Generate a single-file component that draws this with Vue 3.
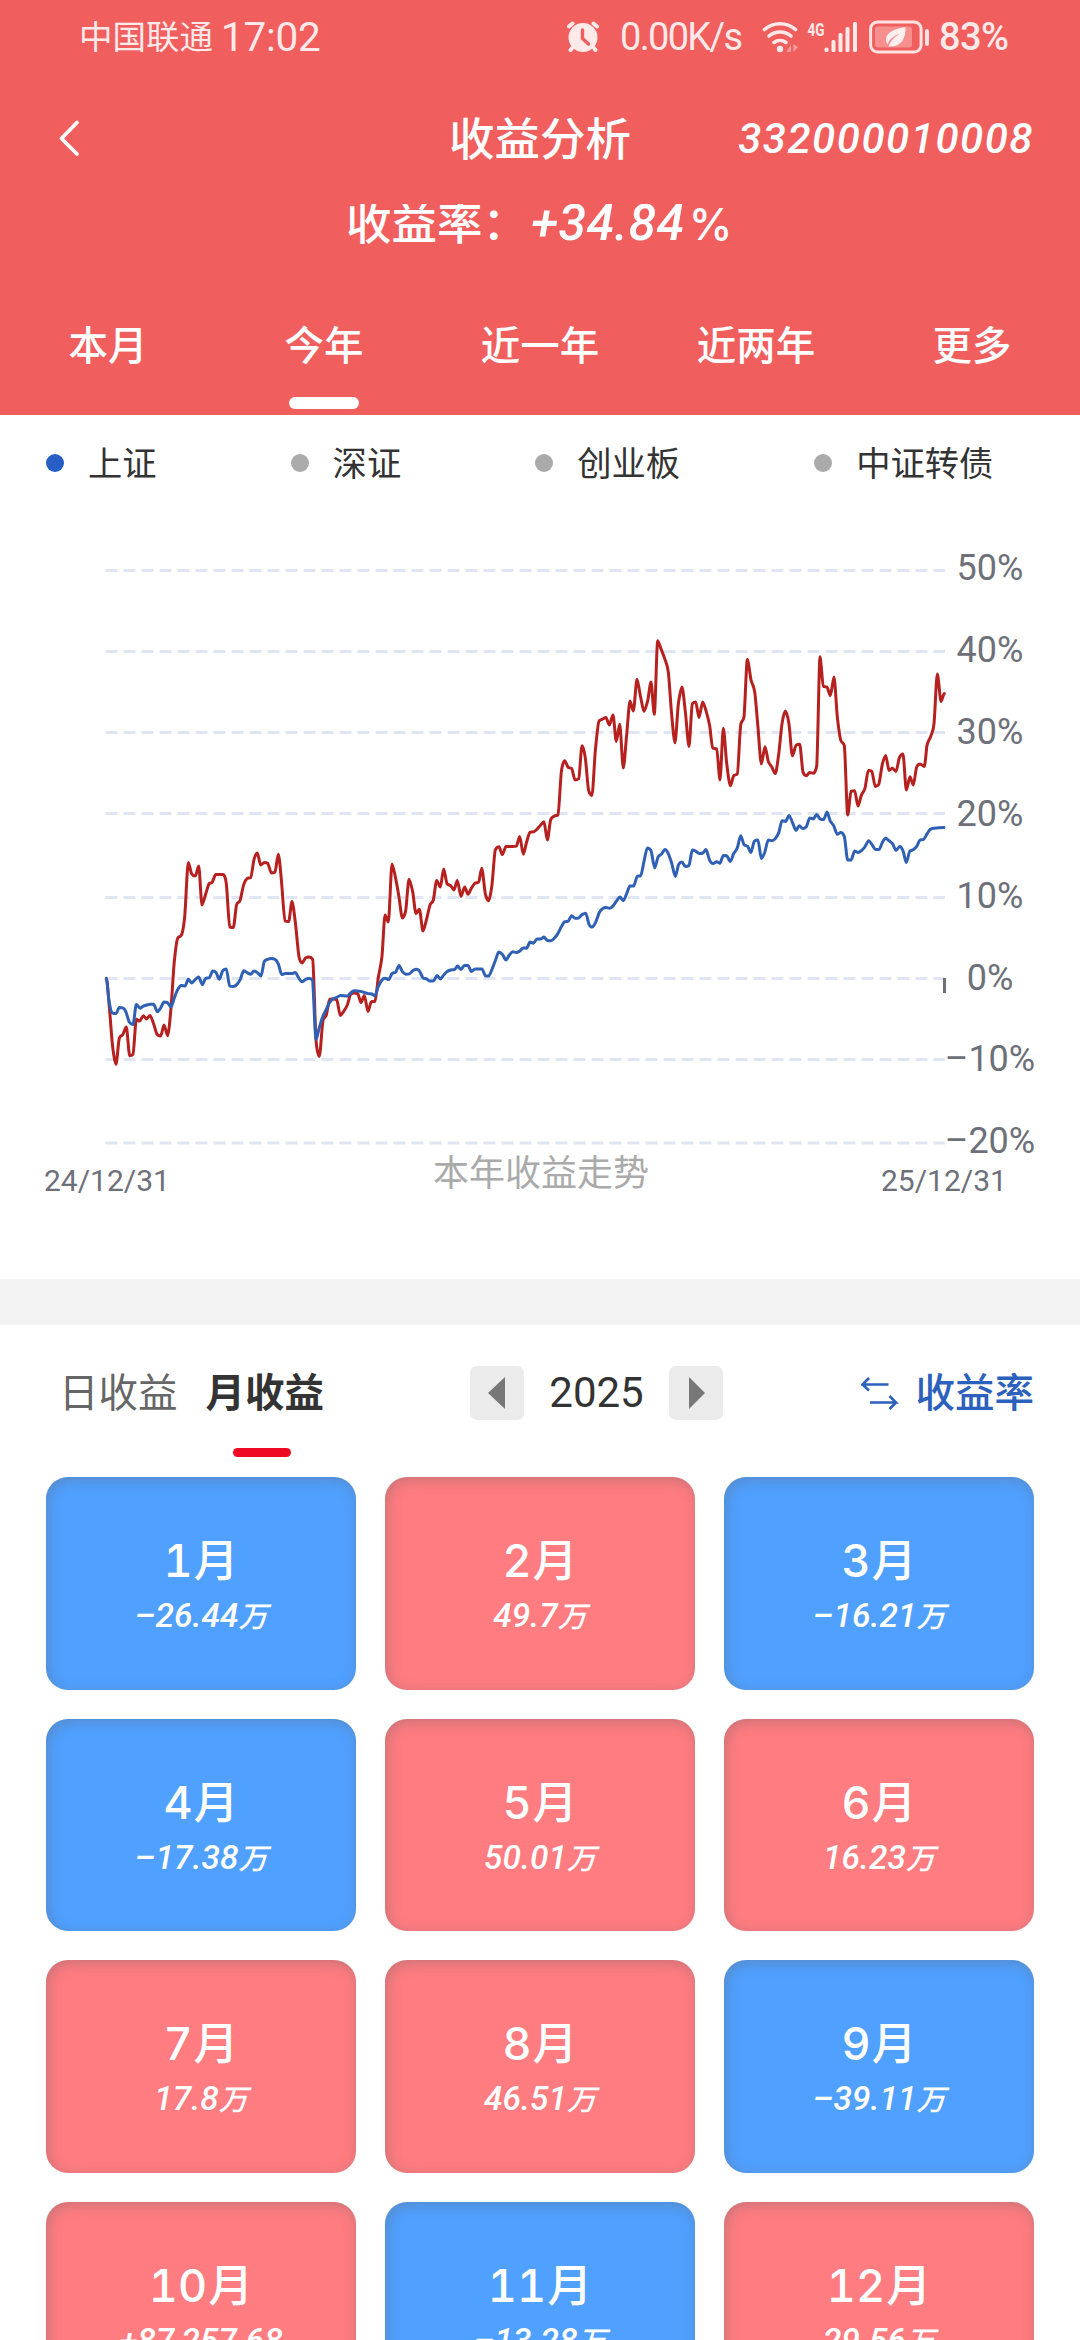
<script setup>
const periods = ['本月', '今年', '近一年', '近两年', '更多']
const indices = ['上证', '深证', '创业板', '中证转债']
const months = [
  '-26.44万', '49.7万', '-16.21万', '-17.38万', '50.01万', '16.23万',
  '17.8万', '46.51万', '-39.11万', '+87,257.68', '-13.28万', '29.56万',
]
const gridLines = [570.5, 651.5, 732.5, 813.5, 897.5, 978.5, 1059.5, 1143]
const labels = ['50%', '40%', '30%', '20%', '10%', '0%', '–10%', '–20%']

// Each series is stored in three chunks; samples are "x,y" in chunk-local units.
const origins = [90, 400, 720]
const mine = [
  '49,1227 59,1320 68,1420 78,1468 88,1395 98,1385 109,1364 119,1444 129,1440 139,1342 149,1347 160,1332 170,1341 180,1331 192,1358 201,1384 212,1389 222,1358 233,1388 243,1310 253,1180 263,1115 274,1107 284,1055 295,903 305,935 316,941 326,913 336,1022 346,995 357,963 367,958 377,937 388,937 400,937 409,962 419,1083 430,1085 440,1020 450,1010 461,965 471,948 482,945 492,895 502,876 512,910 523,903 533,905 544,932 555,930 565,880 574,950 585,1067 596,1068 606,1012 616,1070 627,1167 636,1184 647,1170 658,1168 668,1175 678,1400 688,1446 699,1345 709,1330 719,1286 730,1285 740,1287 751,1331 761,1320 772,1302 782,1272 792,1268 803,1270 813,1295 823,1275 834,1320 844,1293 855,1292 865,1225 876,1165 885,1050 895,1070 906,907 917,948 927,1000',
  '7,1058 17,1038 27,950 38,985 48,1046 58,1034 69,1095 79,1065 90,1022 100,1008 110,953 121,972 131,921 141,962 152,968 162,980 172,953 183,998 194,972 204,992 214,975 225,961 236,958 245,919 256,990 266,1010 276,965 286,868 297,859 307,881 318,858 328,858 338,858 349,857 359,830 370,880 380,845 390,818 401,817 411,810 422,798 432,789 442,840 452,783 463,773 474,770 484,650 494,618 504,636 515,640 525,672 536,668 546,576 556,610 566,702 576,715 586,590 597,507 607,502 618,497 628,518 639,490 649,564 659,516 670,638 680,545 690,451 700,479 711,390 721,435 732,480 743,450 753,398 763,488 773,282 783,305 794,332 805,370 815,490 825,568 835,460 846,412 856,480 867,578 877,459 887,454 897,497 908,454 918,478 929,520 938,583 950,585 960,672',
  '10,527 20,625 31,688 41,660 52,655 62,518 72,495 82,335 93,392 104,425 114,525 124,627 135,579 145,620 155,635 166,654 176,600 186,515 196,479 207,515 217,604 228,575 239,572 249,650 259,660 269,651 280,653 290,633 300,327 310,410 321,412 331,436 342,384 352,495 362,560 373,576 383,770 393,704 404,702 414,745 424,715 435,695 445,645 455,647 466,690 476,684 487,628 497,603 507,645 517,639 528,648 538,610 549,599 559,700 570,663 580,686 590,635 600,627 613,634 621,575 632,550 642,515 652,375 663,452 673,430',
]
const index = [
  '49,1227 57,1290 67,1324 78,1326 88,1309 98,1310 108,1322 118,1350 129,1357 139,1301 150,1311 160,1305 170,1302 180,1300 191,1300 202,1321 212,1310 222,1294 232,1295 243,1308 253,1282 263,1259 274,1247 285,1249 295,1230 305,1240 316,1230 326,1224 337,1245 347,1227 358,1226 368,1207 378,1211 388,1230 398,1206 409,1201 419,1249 430,1250 440,1245 451,1230 461,1206 471,1211 482,1216 492,1207 503,1212 513,1221 523,1180 533,1174 544,1172 555,1174 565,1187 575,1217 586,1214 605,1214 616,1211 626,1226 636,1237 647,1230 658,1228 667,1232 678,1400 688,1365 698,1335 709,1314 719,1295 730,1284 740,1281 751,1275 772,1277 782,1268 792,1262 813,1264 834,1270 845,1271 855,1276 865,1250 876,1232 886,1227 896,1231 906,1214 917,1210 927,1191',
  '7,1208 18,1216 28,1215 38,1206 48,1202 58,1206 69,1226 80,1229 90,1235 101,1234 111,1219 121,1229 131,1218 142,1208 152,1204 163,1203 173,1193 183,1203 193,1191 204,1191 214,1208 225,1201 246,1201 256,1220 266,1221 276,1202 287,1175 296,1154 307,1160 318,1176 328,1162 338,1153 349,1155 359,1151 370,1142 380,1143 390,1126 400,1129 411,1117 422,1117 432,1112 442,1121 453,1122 463,1115 473,1103 484,1083 494,1069 504,1068 515,1052 525,1059 536,1058 546,1049 557,1045 567,1076 577,1084 587,1070 598,1043 608,1032 618,1029 629,1031 639,1025 650,1010 660,1000 670,1010 680,990 690,969 701,969 712,941 722,940 732,900 742,862 753,870 764,918 774,888 784,880 795,867 805,878 815,905 826,942 836,908 846,902 856,914 867,911 877,868 887,871 898,878 909,876 918,867 929,897 939,906 950,901 960,905',
  '10,883 20,884 31,900 41,878 52,862 62,828 72,853 83,858 93,875 103,843 114,840 124,892 134,875 145,840 155,842 165,837 176,820 186,786 197,788 207,771 217,790 228,813 238,800 248,808 259,803 269,778 280,781 290,769 300,781 311,783 321,762 331,787 341,800 352,824 362,819 373,830 383,896 393,896 404,871 414,875 424,870 434,860 446,842 456,853 467,867 477,867 487,847 497,835 507,842 518,851 528,869 539,858 549,870 559,903 569,872 580,867 590,858 600,840 611,838 621,823 631,810 642,807 672,805',
]

// Smooth curve whose tangents go flat at every local extremum.
function smoothPath(chunks) {
  const pts = chunks.flatMap((chunk, i) =>
    chunk.split(' ').map((pair) => {
      const [x, y] = pair.split(',').map(Number)
      return [origins[i] + x / 3, 540 + y / 2.8]
    })
  )
  const slope = pts.map((p, i) => {
    const a = pts[i - 1]
    const b = pts[i + 1]
    if (!a || !b) return 0
    if ((p[1] - a[1]) * (b[1] - p[1]) <= 0) return 0
    const s = (b[1] - a[1]) / (b[0] - a[0])
    const s0 = (p[1] - a[1]) / (p[0] - a[0])
    const s1 = (b[1] - p[1]) / (b[0] - p[0])
    return Math.sign(s) * Math.min(Math.abs(s), 2.5 * Math.abs(s0), 2.5 * Math.abs(s1))
  })
  let d = `M${pts[0][0].toFixed(1)} ${pts[0][1].toFixed(1)}`
  for (let i = 1; i < pts.length; i++) {
    const [x0, y0] = pts[i - 1]
    const [x1, y1] = pts[i]
    const h = (x1 - x0) * 0.28
    const c = [x0 + h, y0 + slope[i - 1] * h, x1 - h, y1 - slope[i] * h, x1, y1]
    d += 'C' + c.map((n) => n.toFixed(1)).join(' ')
  }
  return d
}
const minePath = smoothPath(mine)
const indexPath = smoothPath(index)
</script>

<template>
  <div class="page">
    <header class="hero">
      <div class="status">
        <span class="carrier">中国联通</span>
        <span class="clock">17:02</span>
        <svg class="alarm" width="34" height="32" viewBox="0 0 34 32">
          <g fill="none" stroke="#ffe9e9" stroke-width="4" stroke-linecap="round">
            <path d="M3 5.500 6.500 2.500M31 5.500 27.500 2.500M7 26 4.500 29M27 26 29.500 29" />
          </g>
          <circle cx="17" cy="16.500" r="14.500" fill="#ffe9e9" />
          <path d="M16.500 9v8.500l6 5.500" fill="none" stroke="#f05e5e" stroke-width="3.400" stroke-linecap="round" />
        </svg>
        <span class="speed">0.00K/s</span>
        <svg class="wifi" width="38" height="32" viewBox="0 0 38 32">
          <g fill="none" stroke="#ffe9e9" stroke-width="3.600" stroke-linecap="round">
            <path d="M2.500 8.500a24 24 0 0 1 31 0M7 15a17 17 0 0 1 22 0M12 21.500a10 10 0 0 1 12 0" />
          </g>
          <circle cx="18" cy="28" r="3.200" fill="#ffe9e9" />
          <path d="M29 23v8h-4.500zM31.500 23v8l4.500-5z" fill="#f79b9b" />
        </svg>
        <svg class="signal" width="52" height="32" viewBox="0 0 52 32">
          <text x="0.500" y="15" class="net" textLength="17" lengthAdjust="spacingAndGlyphs">4G</text>
          <g fill="#ffe9e9">
            <rect x="17.500" y="26.500" width="4" height="4.500" rx="1.500" />
            <rect x="24.500" y="19" width="4" height="12" rx="1.500" />
            <rect x="31.500" y="12" width="4" height="19" rx="1.500" />
            <rect x="38.500" y="6" width="4" height="25" rx="1.500" />
            <rect x="46" y="1" width="4" height="30" rx="1.500" />
          </g>
        </svg>
        <svg class="battery" width="62" height="34" viewBox="0 0 62 34">
          <rect x="1.600" y="2" width="50.500" height="30" rx="7" fill="none" stroke="#ffe3e3" stroke-width="3" />
          <rect x="6" y="6.500" width="37" height="21" rx="3" fill="#f78f8f" />
          <rect x="56" y="9" width="4" height="17" rx="2" fill="#ffe3e3" />
          <path d="M36.500 7C26 9 17 12 17 19.500c0 2 .5 3.500 1.500 4.500 3-6 7-8.500 12-10-5 3-8.500 6-11 12.500C31 27.500 37 20 36.500 7Z" fill="#ffeeee" />
        </svg>
        <span class="percent">83%</span>
      </div>
      <nav class="nav">
        <svg class="back" width="24" height="40" viewBox="0 0 24 40">
          <path d="M19 3.500 3.500 19.500 19 35" fill="none" stroke="#fff" stroke-width="3.800" stroke-linecap="round" stroke-linejoin="round" />
        </svg>
        <h1>收益分析</h1>
        <span class="account">332000010008</span>
      </nav>
      <div class="yield">
        <span class="yield-name">收益率：</span><em>+34.84</em><span class="pct">%</span>
      </div>
      <div class="periods">
        <div v-for="(p, i) in periods" :key="p" class="period" :class="{ active: i === 1 }">{{ p }}</div>
      </div>
    </header>

    <div class="legend">
      <div v-for="(name, i) in indices" :key="name" class="legend-item" :class="{ on: i === 0 }">
        <i></i><span>{{ name }}</span>
      </div>
    </div>

    <svg class="chart" width="1080" height="769" viewBox="0 510 1080 769">
      <line v-for="y in gridLines" :key="y" x1="105.500" x2="945" :y1="y" :y2="y" class="grid" />
      <rect x="943" y="978" width="3" height="15" fill="#6e7079" />
      <path :d="minePath" class="line mine" />
      <path :d="indexPath" class="line index" />
      <text v-for="(t, i) in labels" :key="t" x="990" :y="580 + i * 81.900" class="axis">{{ t }}</text>
      <text x="44" y="1191" class="date">24/12/31</text>
      <text x="881" y="1191" class="date">25/12/31</text>
      <text x="541" y="1186" class="caption">本年收益走势</text>
    </svg>

    <div class="divider"></div>

    <div class="toolbar">
      <span class="mode">日收益</span>
      <span class="mode current">月收益</span>
      <div class="year">
        <button><svg width="18" height="32" viewBox="0 0 18 32"><path d="M17 0v32L0 16z" fill="#777" /></svg></button>
        <span>2025</span>
        <button><svg width="18" height="32" viewBox="0 0 18 32"><path d="M2 0v32l16-16z" fill="#777" /></svg></button>
      </div>
      <div class="switch">
        <svg width="38" height="36" viewBox="0 0 38 36">
          <path d="M8 3 1.500 9.500h26M1.500 9.500 8 15.500M9 27.500h26L28.500 21M35 27.500 28.500 34" fill="none" stroke="#2b60bd" stroke-width="2.600" />
        </svg>
        <span>收益率</span>
      </div>
    </div>

    <div class="months">
      <div v-for="(v, i) in months" :key="i" class="month" :class="{ loss: v[0] === '-' }">
        <div class="name">{{ i + 1 }}<b>月</b></div>
        <div class="amount">{{ v.replace('-', '–').replace('万', '') }}<span v-if="v.endsWith('万')">万</span></div>
      </div>
    </div>
  </div>
</template>

<style>
body {
  margin: 0;
}
</style>

<style scoped>
.page {
  width: 1080px;
  height: 2340px;
  overflow: hidden;
  background: #fff;
  color: #333;
  font-family: Inter, "Noto Sans CJK SC", sans-serif;
}
.hero {
  height: 415px;
  background: #f15e5e;
  color: #fff;
}
.status {
  display: flex;
  align-items: center;
  height: 74px;
  padding-left: 79px;
  color: #ffe9e9;
  white-space: nowrap;
}
.status span,
.status svg {
  flex: none;
}
.carrier {
  width: 142px;
  font-size: 33.500px;
  line-height: 50px;
}
.clock {
  width: 345px;
  font-family: Roboto, sans-serif;
  font-size: 40.500px;
  letter-spacing: -0.300px;
}
.speed {
  width: 125px;
  margin-left: 20px;
  font-family: Roboto, sans-serif;
  font-size: 38px;
  letter-spacing: -1.700px;
}
.wifi {
  margin-left: 17px;
}
.signal {
  margin-left: 7px;
}
.net {
  fill: #ffe9e9;
  font: bold 19px Roboto, sans-serif;
}
.battery {
  margin-left: 10px;
}
.percent {
  margin-left: 8px;
  font-family: Roboto, sans-serif;
  font-size: 38px;
  font-weight: 500;
  letter-spacing: -0.600px;
}
.nav {
  display: grid;
  grid-template-columns: 1fr 200px 1fr;
  align-items: center;
  height: 130px;
  padding: 0 46px 0 58px;
}
.nav h1 {
  margin: 0;
  text-align: center;
  font-size: 45.500px;
  font-weight: 500;
  line-height: 60px;
  white-space: nowrap;
  transform: translate(-6px, 1px);
}
.account {
  justify-self: end;
  font: italic 500 42px/50px Roboto, sans-serif;
  letter-spacing: 1.500px;
}
.yield {
  display: flex;
  align-items: baseline;
  height: 60px;
  padding-left: 346px;
  overflow: hidden;
  font-size: 45.500px;
  font-weight: 500;
  line-height: 38px;
  white-space: nowrap;
}
.yield-name {
  width: 185px;
}
.yield em {
  font: italic 500 50px/38px Roboto, sans-serif;
  letter-spacing: 0.500px;
}
.pct {
  margin-left: 4px;
  font-size: 44px;
}
.periods {
  display: grid;
  grid-template-columns: repeat(5, 1fr);
  height: 151px;
}
.period {
  display: flex;
  flex-direction: column;
  align-items: center;
  padding-top: 53px;
  font-size: 39.500px;
  font-weight: 500;
  line-height: 58px;
}
.active::after {
  content: "";
  width: 70px;
  height: 12px;
  margin-top: 22px;
  border-radius: 6px;
  background: #fff;
}
.legend {
  display: flex;
  gap: 134px;
  align-items: center;
  height: 95px;
  padding-left: 46px;
}
.legend-item {
  display: flex;
  align-items: center;
  gap: 24px;
  font-size: 34.300px;
  line-height: 50px;
  white-space: nowrap;
}
.legend-item i {
  width: 18px;
  height: 18px;
  border-radius: 50%;
  background: #aaa;
}
.legend-item span {
  padding-top: 2px;
}
.legend-item.on i {
  background: #275fc4;
}
.chart {
  display: block;
}
.grid {
  stroke: #e0e6f1;
  stroke-width: 3;
  stroke-dasharray: 12 6;
}
.line {
  fill: none;
  stroke-width: 3;
  stroke-linejoin: round;
  stroke-linecap: round;
}
.mine {
  stroke: #b6201f;
}
.index {
  stroke: #2f60b4;
}
.axis {
  fill: #6e7079;
  font-family: Roboto, sans-serif;
  font-size: 36px;
  text-anchor: middle;
}
.date {
  fill: #6e7079;
  font-family: Roboto, sans-serif;
  font-size: 30px;
}
.caption {
  fill: #aaa;
  font-size: 36px;
  text-anchor: middle;
}
.divider {
  height: 46px;
  background: #f3f3f3;
}
.toolbar {
  display: flex;
  align-items: center;
  height: 152px;
  padding: 0 46px 0 59px;
  font-size: 39.500px;
  line-height: 54px;
}
.toolbar > * {
  margin-top: -16px;
}
.mode {
  color: #666;
}
.current {
  position: relative;
  margin-left: 28px;
  color: #333;
  font-weight: 700;
}
.current::after {
  content: "";
  position: absolute;
  left: 27px;
  top: 82px;
  width: 58px;
  height: 9px;
  border-radius: 5px;
  background: #ee0a24;
}
.year {
  display: flex;
  align-items: center;
  margin-left: 146px;
}
.year span {
  width: 145px;
  text-align: center;
  font-family: Roboto, sans-serif;
  font-size: 42px;
}
.year button {
  display: flex;
  align-items: center;
  justify-content: center;
  width: 54px;
  height: 54px;
  padding: 0;
  border: 0;
  border-radius: 7px;
  background: #ebebeb;
}
.switch {
  display: flex;
  align-items: center;
  gap: 17px;
  margin-left: auto;
  color: #2b60bd;
  font-weight: 500;
}
.months {
  display: grid;
  grid-template-columns: repeat(3, 1fr);
  grid-auto-rows: 212.700px;
  gap: 29px;
  padding: 0 46px;
}
.month {
  padding-top: 54px;
  box-sizing: border-box;
  border-radius: 22px;
  background: #ff7c80;
  box-shadow: inset 2px 3px 14px rgba(100, 101, 102, 0.36);
  color: #fff;
  text-align: center;
}
.month.loss {
  background: #4fa0ff;
}
.name {
  font-size: 45px;
  font-weight: 500;
  line-height: 60px;
  font-variant-numeric: tabular-nums;
}
.name b {
  margin-left: 1px;
  font-weight: 500;
}
.amount {
  font: italic 500 33.500px/50px Roboto, "Noto Sans CJK SC", sans-serif;
}
.amount span {
  font-size: 29px;
}
</style>
